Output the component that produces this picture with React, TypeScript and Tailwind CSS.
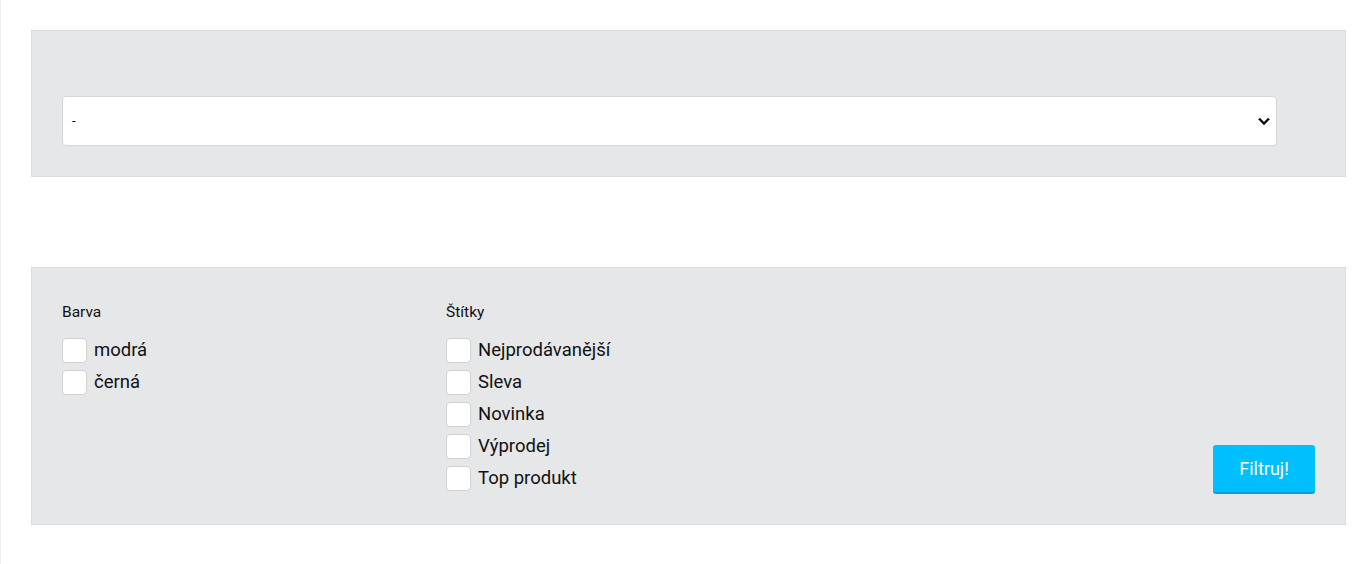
import React from "react";

const Box = ({ label }: { label: string }) => (
  <label className="flex items-center h-[32px] cursor-pointer">
    <span className="w-[25px] h-[25px] bg-white border border-[#cfd1d4] rounded-[4px] shrink-0" />
    <span className="ml-[7px] text-[18.5px] text-[#111] leading-none">{label}</span>
  </label>
);

export default function App() {
  return (
    <div
      className="w-[1372px] h-[564px] bg-white border-l border-[#eeeeee] relative"
      style={{ fontFamily: "Roboto, 'Liberation Sans', sans-serif" }}
    >
      <div className="pl-[30px] pr-[26px] pt-[30px]">
        <div className="bg-[#e6e7e9] border border-[#dadbdd] pt-[65px] pb-[30px] pl-[30px] pr-[68px]">
          <div className="h-[50px] bg-white border border-[#d3d7db] rounded-[4px] flex items-center justify-between pl-[9px] pr-[5px]">
            <span className="text-[13px] text-black">-</span>
            <svg width="14" height="10" viewBox="0 0 14 10">
              <path d="M2 2.5 L7 7.5 L12 2.5" fill="none" stroke="#111" strokeWidth="2.4" />
            </svg>
          </div>
        </div>
        <div className="h-[90px]" />
        <div className="bg-[#e6e7e9] border border-[#dadbdd] h-[258px] pl-[30px] pr-[30px] pt-[35px] pb-[30px] flex">
          <div className="w-[384px]">
            <div className="text-[15.5px] text-[#111] leading-[18px] mb-[17px]">Barva</div>
            <div className="-mt-[4px]">
              <Box label="modrá" />
              <Box label="černá" />
            </div>
          </div>
          <div className="flex-1">
            <div className="text-[15.5px] text-[#111] leading-[18px] mb-[17px]">Štítky</div>
            <div className="-mt-[4px]">
              <Box label="Nejprodávanější" />
              <Box label="Sleva" />
              <Box label="Novinka" />
              <Box label="Výprodej" />
              <Box label="Top produkt" />
            </div>
          </div>
          <div className="flex items-end">
            <button className="w-[102px] h-[49px] bg-[#00bfff] border-b-2 border-[#0b9fd6] rounded-[3px] text-white text-[18px]">
              Filtruj!
            </button>
          </div>
        </div>
      </div>
    </div>
  );
}
